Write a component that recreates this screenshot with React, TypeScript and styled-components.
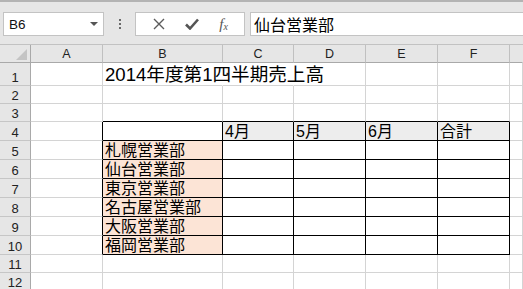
import React from "react";
import styled, { createGlobalStyle } from "styled-components";

const GlobalStyle = createGlobalStyle`
  html, body {
    margin: 0;
    padding: 0;
    background: #ffffff;
    overflow: hidden;
  }
`;

const COLS = ["A", "B", "C", "D", "E", "F", ""];
const COL_WIDTHS = "31px 72px 120px 71px 72px 72px 72px 1fr";
const ROW_HEIGHTS = [23, 18, 18, 19, 19, 19, 19, 19, 19, 19, 18, 18];

const cells: Record<string, string> = {
  "1-1": "2014年度第1四半期売上高",
  "4-2": "4月",
  "4-3": "5月",
  "4-4": "6月",
  "4-5": "合計",
  "5-1": "札幌営業部",
  "6-1": "仙台営業部",
  "7-1": "東京営業部",
  "8-1": "名古屋営業部",
  "9-1": "大阪営業部",
  "10-1": "福岡営業部",
};

// cells whose right gridline is hidden by the overflowing title
const overflowed = new Set(["1-1", "1-2"]);

const inTable = (r: number) => r >= 4 && r <= 10;

export default function App() {
  return (
    <Window>
      <GlobalStyle />
      <FormulaBar>
        <NameBox>
          B6
          <Caret />
        </NameBox>
        <Dots>
          <i />
          <i />
          <i />
        </Dots>
        <FxButtons>
          <svg width="12" height="12" viewBox="0 0 12 12">
            <path d="M1 1 L11 11 M11 1 L1 11" stroke="#5b5b5b" strokeWidth="1.4" fill="none" />
          </svg>
          <svg width="14" height="12" viewBox="0 0 14 12">
            <path d="M1 6.5 L5 10.5 L13 1.5" stroke="#555555" strokeWidth="2.6" fill="none" />
          </svg>
          <FxLabel>
            f<sub>x</sub>
          </FxLabel>
        </FxButtons>
        <FormulaInput>仙台営業部</FormulaInput>
      </FormulaBar>

      <Sheet>
        <Corner>
          <svg width="11" height="11" viewBox="0 0 11 11">
            <path d="M11 0 L11 11 L0 11 Z" fill="#c4c4c4" />
          </svg>
        </Corner>
        {COLS.map((c, i) => (
          <ColHeader key={i} $last={i === COLS.length - 1}>
            {c}
          </ColHeader>
        ))}

        {ROW_HEIGHTS.map((h, ri) => {
          const r = ri + 1;
          return (
            <React.Fragment key={r}>
              <RowHeader style={{ height: h }}>{r}</RowHeader>
              {COLS.map((_, c) => {
                const key = `${r}-${c}`;
                const text = cells[key];
                const blackRight = inTable(r) && c <= 5;
                const blackBottom = r >= 3 && r <= 10 && c >= 1 && c <= 5;
                let fill = "#ffffff";
                if (c === 1 && r >= 5 && r <= 10) fill = "#fce4d6";
                if (r === 4 && c >= 2 && c <= 5) fill = "#ededed";
                let right = blackRight ? "#000000" : "#d4d4d4";
                if (overflowed.has(key)) right = "#ffffff";
                return (
                  <Cell
                    key={c}
                    $fill={fill}
                    $right={right}
                    $bottom={blackBottom ? "#000000" : "#d4d4d4"}
                    $title={r === 1}
                    $front={!!text && r === 1}
                  >
                    {text}
                  </Cell>
                );
              })}
            </React.Fragment>
          );
        })}
      </Sheet>
    </Window>
  );
}

const Window = styled.div`
  width: 523px;
  height: 289px;
  overflow: hidden;
  display: flex;
  flex-direction: column;
  font-family: "Liberation Sans", "Noto Sans CJK JP", sans-serif;
`;

const FormulaBar = styled.div`
  height: 45px;
  box-sizing: border-box;
  border-top: 2px solid #b3b3b3;
  border-bottom: 1px solid #c2c2c2;
  background: #e6e6e6;
  display: flex;
  align-items: center;
  padding: 0 0 0 3px;
  flex-shrink: 0;
`;

const Box = styled.div`
  height: 24px;
  box-sizing: border-box;
  background: #ffffff;
  border: 1px solid #c3c3c3;
  display: flex;
  align-items: center;
  margin-top: 2px;
`;

const NameBox = styled(Box)`
  width: 101px;
  padding: 0 5px 0 5px;
  font-size: 13.5px;
  color: #111;
  justify-content: space-between;
`;

const Caret = styled.span`
  width: 0;
  height: 0;
  border-left: 4px solid transparent;
  border-right: 4px solid transparent;
  border-top: 4px solid #555;
`;

const Dots = styled.div`
  width: 31px;
  display: flex;
  flex-direction: column;
  align-items: center;
  gap: 2px;
  margin-top: 2px;

  i {
    width: 2px;
    height: 2px;
    background: #6a6a6a;
  }
`;

const FxButtons = styled(Box)`
  width: 110px;
  justify-content: space-around;
  padding: 0 6px 0 7px;
`;

const FxLabel = styled.span`
  font-family: "Liberation Serif", serif;
  font-style: italic;
  font-size: 15px;
  color: #555;
  line-height: 1;

  sub {
    font-size: 10px;
    vertical-align: -1px;
  }
`;

const FormulaInput = styled(Box)`
  flex: 1;
  margin-left: 5px;
  border-right: none;
  padding-left: 3px;
  font-family: "Liberation Sans", "Noto Sans CJK JP", sans-serif;
  font-size: 16px;
  color: #000;
`;

const Sheet = styled.div`
  display: grid;
  grid-template-columns: ${COL_WIDTHS};
  grid-auto-rows: auto;
`;

const HeaderBase = styled.div`
  box-sizing: border-box;
  background: #e6e6e6;
  color: #222;
  font-family: "Liberation Sans", sans-serif;
  font-size: 12.5px;
  display: flex;
`;

const Corner = styled(HeaderBase)`
  height: 18px;
  border-right: 1px solid #a9a9a9;
  border-bottom: 1px solid #a9a9a9;
  align-items: flex-end;
  justify-content: flex-end;
  padding: 0 3px 2px 0;
`;

const ColHeader = styled(HeaderBase)<{ $last: boolean }>`
  height: 18px;
  border-right: 1px solid ${(p) => (p.$last ? "transparent" : "#c0c0c0")};
  border-bottom: 1px solid #a9a9a9;
  align-items: center;
  justify-content: center;
`;

const RowHeader = styled(HeaderBase)`
  border-right: 1px solid #a9a9a9;
  border-bottom: 1px solid #c6c6c6;
  align-items: flex-end;
  justify-content: center;
  padding-bottom: 1px;
  font-size: 13px;
  line-height: 1;
`;

const Cell = styled.div<{
  $fill: string;
  $right: string;
  $bottom: string;
  $title: boolean;
  $front: boolean;
}>`
  box-sizing: border-box;
  background: ${(p) => p.$fill};
  border-right: 1px solid ${(p) => p.$right};
  border-bottom: 1px solid ${(p) => p.$bottom};
  font-family: "Liberation Sans", "Noto Sans CJK JP", sans-serif;
  font-size: ${(p) => (p.$title ? "18.6px" : "16px")};
  line-height: 1;
  color: #000;
  white-space: nowrap;
  display: flex;
  align-items: flex-end;
  padding: 0 0 0 2px;
  position: relative;
  z-index: ${(p) => (p.$front ? 1 : 0)};
`;
